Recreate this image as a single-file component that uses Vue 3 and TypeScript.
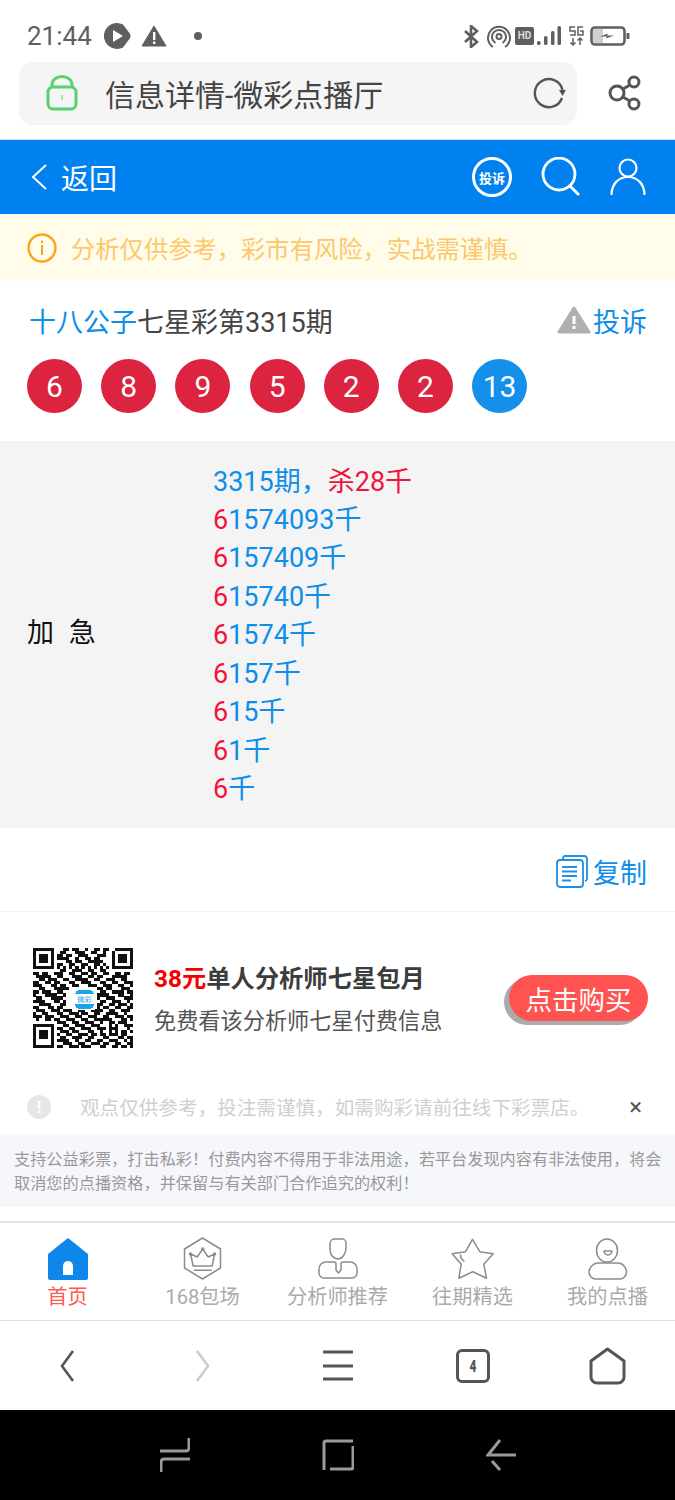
<script setup lang="ts">
interface Tab {
  label: string
  active?: boolean
}

const balls = [
  { value: 6, blue: false },
  { value: 8, blue: false },
  { value: 9, blue: false },
  { value: 5, blue: false },
  { value: 2, blue: false },
  { value: 2, blue: false },
  { value: 13, blue: true }
]

const picks = ['1574093', '157409', '15740', '1574', '157', '15', '1', '']

const tabs: Tab[] = [
  { label: '首页', active: true },
  { label: '168包场' },
  { label: '分析师推荐' },
  { label: '往期精选' },
  { label: '我的点播' }
]

// 33 x 33 modules
const qrRows = [
  '111111100011011001001101100111111',
  '100000100110001110011001001000001',
  '101110101101100111000111001011101',
  '101110101111001001101100001011101',
  '101110100001101100111110001011101',
  '100000101100110011001101001000001',
  '111111101010101010101010101111111',
  '000000000110011100110011000000000',
  '110110011100110011011001100110110',
  '011111001100011100110110001111100',
  '001101110011001111001100111001100',
  '110011011000110011100011001100111',
  '111000110110011000111001110011001',
  '001100011111000000000110110001110',
  '110111001100000000000011001111011',
  '100011110010000000000111100011001',
  '011000111100000000000100111000111',
  '111100011010000000000011001110010',
  '001111000110000000000110011011101',
  '110001101100000000000101100110011',
  '011100111011100110011110011001110',
  '100110001100111011001100111100100',
  '111011100111001100111001100111011',
  '010011011001110011001111110001101',
  '000000001110011001110010011011100',
  '111111100011001110011100010100111',
  '100000101100110011100111011100010',
  '101110100111011000110010010101101',
  '101110101001100111011011011101100',
  '101110100110011100110001100011011',
  '100000101111001001100110011100101',
  '100000100011100110011101100110011',
  '111111101100111011100011001101101'
]

const qrRects = qrRows.flatMap((row, y) =>
  [...row].flatMap((cell, x) => (cell === '1' ? [{ x, y }] : []))
)
</script>

<template>
  <div class="phone">
    <div class="status">
      <span class="clock">21:44</span>
      <svg class="s-play" width="27" height="26" viewBox="0 0 27 26">
        <path d="M13 0a13 13 0 1 0 6 24.500l6-8c2-2 2-5 0-7l-6-8a13 13 0 0 0-6-1.500z" fill="#5f5f5f" />
        <path d="M9 7l10 6-10 6z" fill="#fff" />
      </svg>
      <svg class="s-warn" width="26" height="22" viewBox="0 0 26 22">
        <path d="M13 1L25 21H1z" fill="#5f5f5f" stroke="#5f5f5f" stroke-linejoin="round" />
        <path d="M12 7h2.400v8H12zM12 16.500h2.400v2.500H12z" fill="#fff" />
      </svg>
      <span class="s-dot"></span>
      <span class="grow"></span>
      <svg width="16" height="23" viewBox="0 0 16 23" fill="none" stroke="#5f5f5f" stroke-width="2.600">
        <path d="M2 6l12 11-6 5V1l6 5L2 17" />
      </svg>
      <svg class="s-gap8" width="24" height="24" viewBox="0 0 24 24" fill="none" stroke="#5f5f5f" stroke-width="2">
        <path d="M6 23a11 11 0 1 1 12 0M8.500 19a7 7 0 1 1 7 0" />
        <circle cx="12" cy="12.500" r="2.500" />
      </svg>
      <span class="s-hd">HD</span>
      <svg class="s-gap3" width="24" height="20" viewBox="0 0 24 20" fill="#5f5f5f">
        <rect x="0" y="15" width="3.500" height="4" rx="1.500" />
        <rect x="7" y="10" width="3.500" height="9" rx="1.500" />
        <rect x="14" y="5" width="3.500" height="14" rx="1.500" />
        <rect x="20.500" y="0" width="3.500" height="19" rx="1.500" />
      </svg>
      <svg class="s-gap8" width="15" height="20" viewBox="0 0 15 20" fill="none" stroke="#5f5f5f" stroke-width="1.500">
        <path d="M6 1H1v4h5v4H1M14 1H9v8h5V5h-3M4 12v7M1.500 16.500L4 19l2.500-2.500M11 19v-7M8.500 14.500L11 12l2.500 2.500" />
      </svg>
      <svg class="s-gap6" width="40" height="20" viewBox="0 0 40 20">
        <rect x="1.500" y="1.500" width="33" height="17" rx="3.500" fill="#fff" stroke="#5f5f5f" stroke-width="2.600" />
        <rect x="3" y="3" width="10" height="14" fill="#d0d0d0" />
        <path d="M36.500 7h2a1 1 0 0 1 1 1v4a1 1 0 0 1-1 1h-2z" fill="#5f5f5f" />
        <path d="M10 10.500l8-3-1 2h7l-8 3 1-2z" fill="#5f5f5f" />
      </svg>
    </div>

    <div class="browser">
      <div class="url">
        <svg width="32" height="36" viewBox="0 0 32 36" fill="none" stroke="#5bd070" stroke-width="3">
          <path d="M6 12V9.500a10 8 0 0 1 20 0V12" />
          <rect x="2" y="12" width="28" height="22" rx="5" />
          <path d="M16 20v5" stroke-width="2" stroke="#a6e4b2" />
        </svg>
        <span class="url-text">信息详情-微彩点播厅</span>
        <svg class="reload" width="34" height="32" viewBox="0 0 34 32" fill="none" stroke="#555" stroke-width="2.400">
          <path d="M30 21A14 14 0 1 1 30.500 13" />
          <path d="M27 13h7l-3.500 6z" fill="#555" stroke="none" />
        </svg>
      </div>
      <svg class="share" width="34" height="36" viewBox="0 0 34 36" fill="none" stroke="#555" stroke-width="3">
        <circle cx="9" cy="18" r="7" />
        <circle cx="26" cy="7" r="5" />
        <circle cx="26" cy="29" r="5" />
        <path d="M15 14l7-4M15 22l7 4" />
      </svg>
    </div>

    <header class="topbar">
      <svg width="16" height="26" viewBox="0 0 16 26" fill="none" stroke="#fff" stroke-width="2">
        <path d="M15 1L2 13l13 12" />
      </svg>
      <span class="back-text">返回</span>
      <span class="grow"></span>
      <span class="report-badge">投诉</span>
      <svg class="t-search" width="40" height="40" viewBox="0 0 40 40" fill="none" stroke="#fff" stroke-width="2.800">
        <circle cx="18" cy="17" r="16" />
        <path d="M29 29l9 9" />
      </svg>
      <svg class="t-user" width="36" height="38" viewBox="0 0 36 38" fill="none" stroke="#fff" stroke-width="2.200">
        <circle cx="18" cy="10" r="8.500" />
        <path d="M1.500 37c0-11 7-18 16.500-18s16.500 7 16.500 18" />
      </svg>
    </header>

    <div class="notice">
      <svg width="30" height="30" viewBox="0 0 30 30" fill="none" stroke="#fba61a" stroke-width="2.400">
        <circle cx="15" cy="15" r="13.500" />
        <path d="M15 12v10M15 7.500v2.500" stroke-width="2" />
      </svg>
      <span>分析仅供参考，彩市有风险，实战需谨慎。</span>
    </div>

    <section class="summary">
      <div class="title-row">
        <h1 class="title"><span class="blue">十八公子</span>七星彩第3315期</h1>
        <svg width="34" height="28" viewBox="0 0 34 28">
          <path d="M17 2L32 26H2z" fill="#b0b0b0" stroke="#b0b0b0" stroke-width="3" stroke-linejoin="round" />
          <path d="M15.500 10h3v8h-3zM15.500 20h3v3h-3z" fill="#fff" />
        </svg>
        <span class="blue report-link">投诉</span>
      </div>
      <div class="balls">
        <span v-for="(ball, i) in balls" :key="i" class="ball" :class="{ 'ball-blue': ball.blue }">{{ ball.value }}</span>
      </div>
    </section>

    <section class="detail">
      <div class="detail-label">加 急</div>
      <div class="detail-lines">
        <div><span class="blue">3315期，</span><span class="red">杀28千</span></div>
        <div v-for="pick in picks" :key="pick"><span class="red">6</span><span class="blue">{{ pick }}千</span></div>
      </div>
    </section>

    <div class="copy-row">
      <svg width="32" height="33" viewBox="0 0 32 33" fill="none" stroke="#1c8fe8" stroke-width="1.800">
        <path d="M7 5V3a2 2 0 0 1 2-2h19a3 3 0 0 1 3 3v20a3 3 0 0 1-2 2" />
        <rect x="1" y="5" width="26" height="27" rx="3" />
        <path d="M6 12h15M6 16.500h15M6 21h15M6 25.500h9" stroke-width="2" />
      </svg>
      <span class="blue">复制</span>
    </div>

    <section class="buy">
      <svg class="qr" width="100" height="100" viewBox="0 0 33 33" shape-rendering="crispEdges">
        <rect v-for="(m, i) in qrRects" :key="i" :x="m.x" :y="m.y" width="1.020" height="1.020" fill="#111" />
        <rect x="13.500" y="13.500" width="7" height="7" fill="#fff" />
        <rect x="14" y="14" width="6" height="6" rx="1" fill="#1ba3ea" />
        <rect x="14" y="15.200" width="6" height="3.400" fill="#fff" />
        <text x="17" y="17.800" font-size="2.400" text-anchor="middle" fill="#1ba3ea">微彩</text>
      </svg>
      <div class="buy-text">
        <div class="buy-title"><span class="price">38元</span>单人分析师七星包月</div>
        <div class="buy-sub">免费看该分析师七星付费信息</div>
      </div>
      <button class="buy-btn">点击购买</button>
    </section>

    <div class="tip">
      <span class="tip-icon">!</span>
      <span class="tip-text">观点仅供参考，投注需谨慎，如需购彩请前往线下彩票店。</span>
      <span class="grow"></span>
      <span class="tip-close">×</span>
    </div>

    <div class="legal">
      支持公益彩票，打击私彩！付费内容不得用于非法用途，若平台发现内容有非法使用，将会取消您的点播资格，并保留与有关部门合作追究的权利！
    </div>

    <span class="grow"></span>

    <nav class="tabs">
      <div v-for="(tab, i) in tabs" :key="tab.label" class="tab" :class="{ active: tab.active }">
        <svg class="tab-icon" width="44" height="44" viewBox="0 0 44 44" fill="none" stroke="#8c8c8c" stroke-width="1.500" stroke-linejoin="round" stroke-linecap="round">
          <template v-if="i === 0">
            <path d="M22 1L42 17v24a2 2 0 0 1-2 2H4a2 2 0 0 1-2-2V17z" fill="#0f86ea" stroke="none" />
            <path d="M17 38V29a5 5 0 0 1 10 0v9z" fill="#fff" stroke="none" />
          </template>
          <template v-else-if="i === 1">
            <path d="M21.500 1L39.500 12V31L21.500 42 3.500 31V12z" />
            <path d="M9.500 17l6.700 3 5.600-8 5.400 8 6.300-3-2.300 12H12.200z" />
            <circle cx="9.500" cy="17" r="1" />
            <circle cx="21.800" cy="12" r="1" />
            <circle cx="33.500" cy="17" r="1" />
            <path d="M13.500 33.300H30" />
          </template>
          <template v-else-if="i === 2">
            <path d="M18 2h8a4 4 0 0 1 4 4v5c0 6-4 11-8 11s-8-4-8-9V7c0-3 2-5 4-5z" />
            <path d="M15 25H10a7 7 0 0 0-7 7v4a5 5 0 0 0 5 5h28a5 5 0 0 0 5-5v-4a7 7 0 0 0-7-7h-7c-1 0-2 1-2 2v6l-2.500 3-2.500-3v-6c0-1-1-2-2-2z" />
          </template>
          <template v-else-if="i === 3">
            <path d="M21.500 2.300L28.800 14.700 42.200 16.700 32.800 27.300 35.500 41.300 21.800 34.700 7.800 41.300 10.200 27.300 1.200 16.700 14.500 14.700z" />
            <path d="M9.500 18c0 3 2 5 3.500 6" />
          </template>
          <template v-else>
            <ellipse cx="21" cy="13.500" rx="10.500" ry="11.500" />
            <path d="M18 14h8c0 2-2 4-4 4s-4-2-4-4z" />
            <path d="M12 26h20c5 0 8.500 5 8.500 9 0 4-3 7-7 7H10c-4 0-7-3-7-7 0-4 4-9 9-9z" />
          </template>
        </svg>
        <span>{{ tab.label }}</span>
      </div>
    </nav>

    <div class="browser-nav">
      <svg width="135" height="36" viewBox="0 0 135 36" fill="none" stroke="#555" stroke-width="2.600">
        <path d="M73 3L62 18l11 15" />
      </svg>
      <svg width="135" height="36" viewBox="0 0 135 36" fill="none" stroke="#ccc" stroke-width="2.600">
        <path d="M62 3l11 15-11 15" />
      </svg>
      <svg width="135" height="36" viewBox="0 0 135 36" fill="none" stroke="#555" stroke-width="3">
        <path d="M53 4h30M53 18h30M53 31h30" />
      </svg>
      <div class="nav-tabs"><span><b>4</b></span></div>
      <svg width="135" height="38" viewBox="0 0 135 38" fill="none" stroke="#555" stroke-width="3">
        <path d="M67.500 2L84 14v16a6 6 0 0 1-6 6H57a6 6 0 0 1-6-6V14z" stroke-linejoin="round" />
      </svg>
    </div>

    <div class="system-nav">
      <svg width="30" height="34" viewBox="0 0 30 34" fill="none" stroke="#9a9a9a" stroke-width="3">
        <path d="M29 0v10a3 3 0 0 1-3 3H0M1 34V24a3 3 0 0 1 3-3h26" />
      </svg>
      <svg width="32" height="32" viewBox="0 0 32 32" fill="none" stroke="#9a9a9a" stroke-width="3">
        <path d="M31 2H4a2 2 0 0 0-2 2v27M31 7v21a2 2 0 0 1-2 2H8" />
      </svg>
      <svg width="30" height="32" viewBox="0 0 30 32" fill="none" stroke="#9a9a9a" stroke-width="3">
        <path d="M30 16H2L14 1M6 22l8 9" />
      </svg>
    </div>
  </div>
</template>

<style scoped>
.phone {
  width: 675px;
  height: 1500px;
  display: flex;
  flex-direction: column;
  background: #fff;
  font-family: Roboto, "Noto Sans CJK SC", sans-serif;
  overflow: hidden;
}

.grow {
  flex: 1;
}

.blue {
  color: #0e8ee9;
}

.red {
  color: #f0143c;
}

.status {
  height: 62px;
  flex-shrink: 0;
  padding: 10px 45px 0 27px;
  box-sizing: border-box;
  display: flex;
  align-items: center;
}

.clock {
  font-size: 26px;
  color: #5f5f5f;
  width: 77px;
}

.s-warn {
  margin-left: 10px;
}

.s-dot {
  width: 8px;
  height: 8px;
  border-radius: 50%;
  background: #5f5f5f;
  margin-left: 27px;
}

.s-gap8 {
  margin-left: 8px;
}

.s-gap6 {
  margin-left: 6px;
}

.s-gap3 {
  margin-left: 3px;
}

.s-hd {
  margin-left: 4px;
  width: 19px;
  height: 18px;
  background: #5f5f5f;
  color: #ddd;
  border-radius: 2px;
  font-size: 10px;
  font-weight: 700;
  line-height: 18px;
  text-align: center;
}

.browser {
  height: 78px;
  flex-shrink: 0;
  box-sizing: border-box;
  border-bottom: 1px solid #d8dde2;
  padding: 0 33px 15px 19px;
  display: flex;
  align-items: center;
}

.url {
  width: 559px;
  height: 63px;
  background: #f5f5f5;
  border-radius: 14px;
  display: flex;
  align-items: center;
  padding: 0 11px 0 27px;
  box-sizing: border-box;
}

.url-text {
  margin-left: 27px;
  font-size: 30px;
  color: #444;
  flex: 1;
}

.share {
  margin-left: 31px;
}

.topbar {
  height: 74px;
  flex-shrink: 0;
  background: #0081ef;
  display: flex;
  align-items: center;
  padding: 0 29px 0 31px;
  box-sizing: border-box;
}

.back-text {
  margin-left: 14px;
  font-size: 28px;
  color: #fff;
}

.report-badge {
  width: 40px;
  height: 40px;
  box-sizing: border-box;
  border: 3px solid #fff;
  border-radius: 50%;
  color: #fff;
  font-size: 13px;
  font-weight: 700;
  display: flex;
  align-items: center;
  justify-content: center;
  white-space: nowrap;
}

.t-search {
  margin-left: 29px;
}

.t-user {
  margin-left: 29px;
}

.notice {
  height: 67px;
  flex-shrink: 0;
  background: #fffce9;
  display: flex;
  align-items: center;
  padding-left: 27px;
  font-size: 24.300px;
  color: #fdc76e;
}

.notice span {
  margin-left: 14px;
}

.summary {
  height: 160px;
  flex-shrink: 0;
  box-sizing: border-box;
  padding: 18px 28px 0 27px;
}

.title-row {
  height: 42px;
  display: flex;
  align-items: center;
  font-size: 27px;
}

.title {
  margin: 0 0 0 2px;
  flex: 1;
  font-size: 27px;
  font-weight: 400;
  color: #444;
}

.report-link {
  margin-left: 2px;
}

.balls {
  margin-top: 18px;
  display: flex;
  gap: 19.200px;
}

.ball {
  width: 55px;
  height: 54px;
  border-radius: 50%;
  background: #dc2340;
  color: #fff;
  font-size: 30px;
  display: flex;
  align-items: center;
  justify-content: center;
}

.ball-blue {
  background: #1490ea;
}

.detail {
  height: 387px;
  flex-shrink: 0;
  box-sizing: border-box;
  background: #f4f4f4;
  display: flex;
  padding-left: 27px;
}

.detail-label {
  width: 186px;
  font-size: 27px;
  color: #111;
  word-spacing: 8px;
  align-self: center;
  margin-top: -9px;
}

.detail-lines {
  font-size: 27px;
  line-height: 38.400px;
  align-self: center;
  margin-top: 2px;
}

.copy-row {
  height: 84px;
  flex-shrink: 0;
  box-sizing: border-box;
  border-bottom: 1px solid #f5f5f5;
  display: flex;
  align-items: center;
  justify-content: flex-end;
  padding: 3px 28px 0 0;
  font-size: 27px;
  gap: 5px;
}

.buy {
  height: 172px;
  flex-shrink: 0;
  box-sizing: border-box;
  display: flex;
  align-items: center;
  padding: 0 27px 0 33px;
}

.qr {
  flex-shrink: 0;
}

.buy-text {
  margin-left: 21px;
  flex: 1;
  padding-top: 3px;
}

.buy-title {
  font-size: 24.300px;
  font-weight: 700;
  color: #3c3c3c;
  line-height: 34px;
}

.price {
  color: #f40000;
}

.buy-sub {
  margin-top: 9px;
  font-size: 22.200px;
  color: #555;
  line-height: 32px;
}

.buy-btn {
  width: 139px;
  height: 46px;
  border: none;
  padding: 0;
  border-radius: 23px;
  background: #fe5350;
  box-shadow: -5px 4px 0 #ababab;
  color: #fff;
  font-family: inherit;
  font-size: 26.500px;
  flex-shrink: 0;
}

.tip {
  height: 45px;
  margin-bottom: 5px;
  flex-shrink: 0;
  display: flex;
  align-items: center;
  padding: 0 33px 0 27px;
  box-sizing: border-box;
}

.tip-icon {
  width: 24px;
  height: 24px;
  border-radius: 50%;
  background: #e6e6e6;
  color: #fff;
  font-size: 17px;
  font-weight: 700;
  text-align: center;
  line-height: 24px;
}

.tip-text {
  margin-left: 29px;
  font-size: 19.600px;
  color: #cfcfcf;
}

.tip-close {
  font-size: 24px;
  color: #555;
}

.legal {
  height: 73px;
  flex-shrink: 0;
  box-sizing: border-box;
  background: #f6f7fb;
  padding: 14px 12px 0 14px;
  font-size: 16.200px;
  line-height: 24px;
  color: #999;
}

.tabs {
  height: 100px;
  flex-shrink: 0;
  box-sizing: border-box;
  border-top: 2px solid #e6e6e6;
  border-bottom: 1px solid #e0e0e0;
  display: flex;
}

.tab {
  flex: 1;
  display: flex;
  flex-direction: column;
  align-items: center;
  padding-top: 14px;
  font-size: 20.200px;
  line-height: 30px;
  color: #aaa;
}

.tab.active {
  color: #ff5a50;
}

.tab-icon {
  margin-bottom: 1px;
}

.browser-nav {
  height: 89px;
  flex-shrink: 0;
  display: flex;
  align-items: center;
}

.nav-tabs {
  width: 135px;
  display: flex;
  justify-content: center;
}

.nav-tabs span {
  width: 34px;
  height: 34px;
  box-sizing: border-box;
  border: 3px solid #555;
  border-radius: 6px;
  color: #555;
  font-size: 17px;
  font-weight: 700;
  display: flex;
  align-items: center;
  justify-content: center;
}

.nav-tabs b {
  transform: scaleX(0.7);
}

.system-nav {
  height: 90px;
  flex-shrink: 0;
  background: #000;
  display: flex;
  align-items: center;
  padding-left: 160px;
  gap: 132px;
}
</style>

<style>
html,
body {
  margin: 0;
  background: #fff;
}
</style>
